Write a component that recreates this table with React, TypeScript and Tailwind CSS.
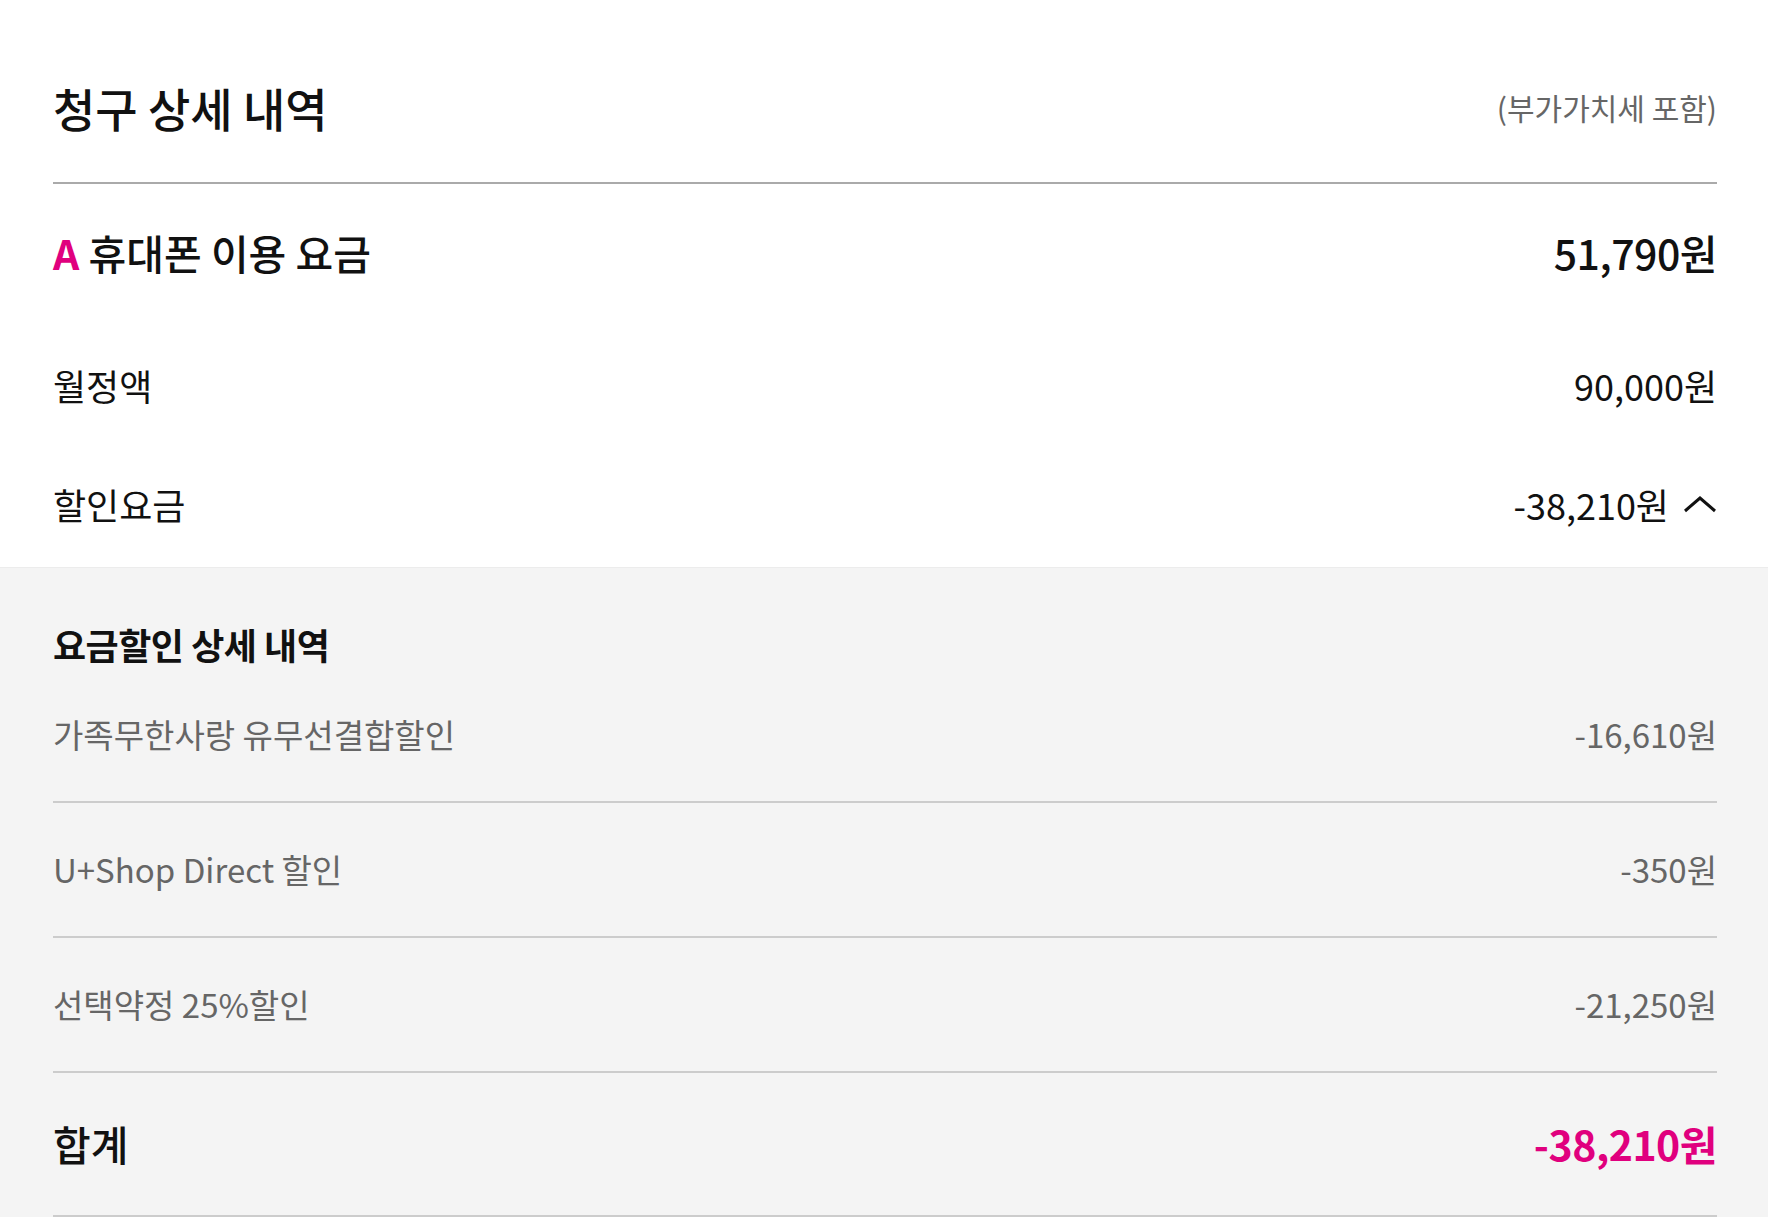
import React from "react";

const font = { fontFamily: '"Noto Sans CJK KR", "Noto Sans", sans-serif' };

function DiscountRow({ label, value }: { label: string; value: string }) {
  return (
    <>
      <div className="h-[133px] flex items-center justify-between text-[33px] text-[#666666]">
        <span>{label}</span>
        <span>{value}</span>
      </div>
      <div className="h-[2px] bg-[#cccccc]" />
    </>
  );
}

export default function App() {
  return (
    <div className="w-[1768px] min-h-[1219px] bg-white text-[#111111]" style={font}>
      <div className="pl-[53px] pr-[51px]">
        <div className="h-[182px] pt-[75px]">
          <div className="h-[64px] flex items-center justify-between">
            <h1 className="text-[46px] font-medium">청구 상세 내역</h1>
            <span className="text-[30px] text-[#666666]">(부가가치세 포함)</span>
          </div>
        </div>
        <div className="h-[2px] bg-[#aaaaaa]" />
        <div className="h-[138px] flex items-center justify-between">
          <div className="text-[41px] font-medium">
            <span className="text-[#e0007e] font-bold">A</span> 휴대폰 이용 요금
          </div>
          <div className="text-[41px] font-medium tracking-[-0.5px]">51,790원</div>
        </div>
        <div className="h-[126px] flex items-center justify-between text-[36px]">
          <span>월정액</span>
          <span>90,000원</span>
        </div>
        <div className="h-[119px] pb-[8px] flex items-center justify-between text-[36px]">
          <span>할인요금</span>
          <div className="flex items-center gap-[14px]">
            <span>-38,210원</span>
            <svg width="34" height="18" viewBox="0 0 34 18" fill="none">
              <path d="M2 16 L17 3 L32 16" stroke="#111111" strokeWidth="3" />
            </svg>
          </div>
        </div>
      </div>
      <div className="bg-[#f4f4f4] border-t border-[#ececec] pl-[53px] pr-[51px]">
        <div className="pt-[51px] h-[100px]">
          <div className="h-[50px] flex items-center text-[36px] font-bold tracking-[-0.5px]">요금할인 상세 내역</div>
        </div>
        <DiscountRow label="가족무한사랑 유무선결합할인" value="-16,610원" />
        <DiscountRow label="U+Shop Direct 할인" value="-350원" />
        <DiscountRow label="선택약정 25%할인" value="-21,250원" />
        <div className="h-[142px] flex items-center justify-between">
          <span className="text-[41px] font-medium">합계</span>
          <span className="text-[41px] font-bold text-[#e0007e] tracking-[-0.5px]">-38,210원</span>
        </div>
        <div className="h-[2px] bg-[#cccccc]" />
      </div>
    </div>
  );
}
